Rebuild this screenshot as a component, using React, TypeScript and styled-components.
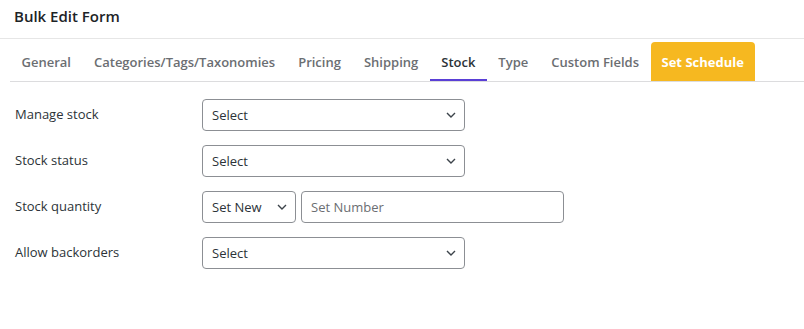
import React, { useState } from 'react'
import styled, { createGlobalStyle } from 'styled-components'

const GlobalStyle = createGlobalStyle`
  body {
    margin: 0;
    background: #fff;
    font-family: 'Open Sans', 'Noto Sans', sans-serif;
    color: #2c3338;
  }
`

const tabs = [
  'General',
  'Categories/Tags/Taxonomies',
  'Pricing',
  'Shipping',
  'Stock',
  'Type',
  'Custom Fields',
]

const Chevron = () => (
  <ChevronIcon width="10" height="6" viewBox="0 0 10 6">
    <path d="M1 1l4 4 4-4" fill="none" stroke="#3c434a" strokeWidth="1.4" />
  </ChevronIcon>
)

const SelectBox = ({ width, options }: { width: number; options: string[] }) => (
  <SelectWrap style={{ width }}>
    <Select defaultValue={options[0]}>
      {options.map(o => (
        <option key={o}>{o}</option>
      ))}
    </Select>
    <Chevron />
  </SelectWrap>
)

export default function App() {
  const [active, setActive] = useState('Stock')
  return (
    <Page>
      <GlobalStyle />
      <Header>
        <Title>Bulk Edit Form</Title>
      </Header>
      <TabBar>
        {tabs.map(t => (
          <Tab key={t} $active={t === active} onClick={() => setActive(t)}>
            {t}
          </Tab>
        ))}
        <ScheduleTab>Set Schedule</ScheduleTab>
      </TabBar>
      <Form>
        <Label>Manage stock</Label>
        <Field>
          <SelectBox width={263} options={['Select', 'Yes', 'No']} />
        </Field>
        <Label>Stock status</Label>
        <Field>
          <SelectBox width={263} options={['Select', 'In stock', 'Out of stock', 'On backorder']} />
        </Field>
        <Label>Stock quantity</Label>
        <Field>
          <SelectBox width={94} options={['Set New', 'Increase', 'Decrease']} />
          <Input placeholder="Set Number" />
        </Field>
        <Label>Allow backorders</Label>
        <Field>
          <SelectBox width={263} options={['Select', 'Do not allow', 'Allow', 'Allow, but notify']} />
        </Field>
      </Form>
    </Page>
  )
}

const Page = styled.div`
  width: 100%;
`

const Header = styled.div`
  height: 39px;
  padding: 0 14px;
  border-bottom: 1px solid #e6e6e6;
  box-sizing: border-box;
  display: flex;
  align-items: flex-start;
`

const Title = styled.h1`
  margin: 5px 0 0;
  font-size: 15px;
  font-weight: 600;
  line-height: 22px;
  color: #1d2327;
`

const TabBar = styled.div`
  display: flex;
  align-items: flex-end;
  margin-left: 10px;
  padding-top: 3px;
  border-bottom: 1px solid #dcdcde;
`

const Tab = styled.div<{ $active: boolean }>`
  height: 39px;
  padding: 2px 11.5px 0;
  display: flex;
  align-items: center;
  box-sizing: border-box;
  font-size: 13px;
  font-weight: 600;
  cursor: pointer;
  color: ${p => (p.$active ? '#2c3338' : '#6b6e72')};
  border-bottom: 2px solid ${p => (p.$active ? '#5a3fd6' : 'transparent')};
`

const ScheduleTab = styled.div`
  height: 39px;
  padding: 0 11px;
  display: flex;
  align-items: center;
  box-sizing: border-box;
  font-size: 13px;
  font-weight: 700;
  color: #fff;
  background: #f6b820;
  border-radius: 4px 4px 0 0;
  cursor: pointer;
`

const Form = styled.div`
  display: grid;
  grid-template-columns: 187px 1fr;
  row-gap: 14px;
  align-items: center;
  padding: 17px 15px;
`

const Label = styled.div`
  font-size: 13px;
  color: #2c3338;
  margin-top: -3px;
`

const Field = styled.div`
  display: flex;
  gap: 5px;
`

const SelectWrap = styled.div`
  position: relative;
  height: 32px;
`

const Select = styled.select`
  appearance: none;
  width: 100%;
  height: 100%;
  box-sizing: border-box;
  padding: 0 24px 0 9px;
  border: 1px solid #8c8f94;
  border-radius: 4px;
  background: #fff;
  font-family: inherit;
  font-size: 13px;
  color: #2c3338;
  outline: none;
`

const ChevronIcon = styled.svg`
  position: absolute;
  right: 9px;
  top: 13px;
  pointer-events: none;
`

const Input = styled.input`
  width: 263px;
  height: 32px;
  box-sizing: border-box;
  padding: 0 9px;
  border: 1px solid #8c8f94;
  border-radius: 4px;
  font-family: inherit;
  font-size: 13px;
  color: #2c3338;
  outline: none;

  &::placeholder {
    color: #6b6e72;
  }
`
